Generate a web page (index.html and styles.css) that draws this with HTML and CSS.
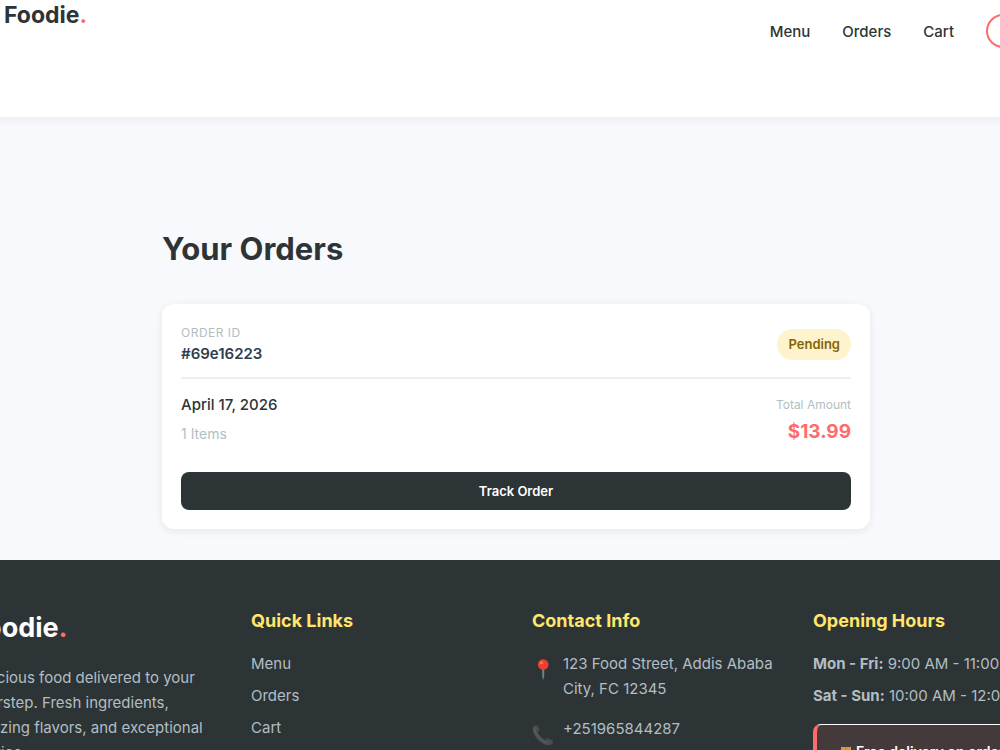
FILE: index.html
```html
<!DOCTYPE html>
<html lang="en">
<head>
    <meta charset="UTF-8">
    <meta name="viewport" content="width=device-width, initial-scale=1.0">
    <title>Your Orders - Foodie</title>
    <link rel="stylesheet" href="styles.css">
</head>
<body>
    <header class="header">
        <a href="#" class="logo">Foodie<span class="dot">.</span></a>
        <nav class="nav">
            <a href="#">Menu</a>
            <a href="#">Orders</a>
            <a href="#">Cart</a>
            <button type="button" class="login-btn">Login</button>
        </nav>
    </header>

    <main class="orders">
        <h1>Your Orders</h1>

        <article class="order-card">
            <div class="order-header">
                <div>
                    <div class="order-label">ORDER ID</div>
                    <div class="order-id">#69e16223</div>
                </div>
                <span class="status">Pending</span>
            </div>
            <div class="order-body">
                <div>
                    <div class="order-date">April 17, 2026</div>
                    <div class="order-items">1 Items</div>
                </div>
                <div class="order-total">
                    <div class="total-label">Total Amount</div>
                    <div class="total-price">$13.99</div>
                </div>
            </div>
            <button type="button" class="track-btn">Track Order</button>
        </article>
    </main>

    <footer class="footer">
        <section>
            <h2 class="footer-logo">Foodie<span class="dot">.</span></h2>
            <p>Delicious food delivered to your doorstep. Fresh ingredients, amazing flavors, and exceptional service.</p>
        </section>

        <section>
            <h3>Quick Links</h3>
            <ul>
                <li><a href="#">Menu</a></li>
                <li><a href="#">Orders</a></li>
                <li><a href="#">Cart</a></li>
            </ul>
        </section>

        <section>
            <h3>Contact Info</h3>
            <div class="contact-item">
                <svg class="icon" viewBox="0 0 22 22" aria-hidden="true">
                    <path d="M10.200 9h2v8.500l-1 3.500-1-3.500z" fill="#5f8796"/>
                    <circle cx="11.200" cy="5.500" r="5.300" fill="#ee3f30"/>
                    <circle cx="9.500" cy="3.700" r="1.500" fill="#f97a6b"/>
                </svg>
                <span>123 Food Street, Addis Ababa City, FC 12345</span>
            </div>
            <div class="contact-item">
                <svg class="icon" viewBox="0 0 22 22" aria-hidden="true">
                    <path d="M1.500 2.500C3 .8 5.500.7 6.300 2.500l1 3c.3 1-.6 1.600-1.500 2.300.8 3.200 4.500 7 7.900 8.200.8-1 1.500-1.600 2.500-1.300l3.500 1.200c2 .9 1.700 3.200 0 4.400-2.300 1.600-6 1.200-9.700-1.300C5.500 16 1.400 11 .8 6.500.6 4.900.7 3.400 1.500 2.500z" fill="#4b4c4e"/>
                    <path d="M2.500 3.500c-.6 5.500 6.500 14 13 15.500" fill="none" stroke="#626466" stroke-width="1"/>
                </svg>
                <span>+251965844287</span>
            </div>
        </section>

        <section>
            <h3>Opening Hours</h3>
            <p class="hours"><strong>Mon - Fri:</strong> 9:00 AM - 11:00 PM</p>
            <p class="hours"><strong>Sat - Sun:</strong> 10:00 AM - 12:00 AM</p>
            <div class="delivery-note">
                <svg class="note-icon" viewBox="0 0 10 12" aria-hidden="true">
                    <rect width="10" height="12" fill="#e39a35"/>
                    <rect x="4" width="2" height="12" fill="#d48c2c"/>
                </svg>
                <span>Free delivery on orders over $30</span>
            </div>
        </section>
    </footer>
</body>
</html>
```

FILE: styles.css
```css
html {
    overflow-x: clip;
}

/* The page bleeds past both edges of the window */
body {
    margin: 0 -62px 0 -30px;
    font-family: Inter, sans-serif;
    font-size: 15px;
    line-height: 25px;
    color: #2d3436;
    background: #f8f9fd;
}

h1, h2, h3, p, ul {
    margin: 0;
    padding: 0;
}

ul {
    list-style: none;
}

a {
    color: inherit;
    text-decoration: none;
}

.dot {
    color: #ff6b6b;
}

/* Header */
.header {
    display: flex;
    justify-content: space-between;
    align-items: flex-start;
    height: 117px;
    padding-left: 34px;
    background: #fff;
    box-shadow: 0 2px 10px rgba(0, 0, 0, 0.06);
}

.logo {
    font-size: 23px;
    font-weight: 700;
    line-height: 30px;
}

.nav {
    display: flex;
    align-items: center;
    gap: 32px;
    padding-top: 14px;
    font-weight: 500;
}

.login-btn {
    width: 76px;
    height: 34px;
    border: 2px solid #ff6b6b;
    border-radius: 17px;
    background: transparent;
    color: #ff6b6b;
    font: inherit;
}

/* Orders */
.orders {
    max-width: 708px;
    margin: 0 auto;
    padding: 112px 0 31px;
}

h1 {
    font-size: 31px;
    line-height: 40px;
    margin-bottom: 35px;
}

.order-card {
    padding: 19px;
    border-radius: 12px;
    background: #fff;
    box-shadow: 0 2px 8px rgba(0, 0, 0, 0.08);
}

.order-header {
    display: flex;
    justify-content: space-between;
    align-items: center;
    padding-bottom: 12px;
    border-bottom: 2px solid #ecf0f1;
}

.order-label,
.total-label {
    font-size: 12px;
    line-height: 20px;
    color: #b2bec3;
}

.order-label {
    letter-spacing: 0.5px;
}

.order-id {
    font-weight: 600;
    line-height: 22px;
    color: #2c3e50;
}

.status {
    padding: 3px 11px;
    border-radius: 19px;
    background: #fff3cd;
    color: #856404;
    font-size: 13px;
    font-weight: 600;
}

.order-body {
    display: flex;
    justify-content: space-between;
    align-items: center;
    padding: 13px 0 26px;
}

.order-date {
    margin-bottom: 4px;
    font-weight: 500;
}

.order-items {
    font-size: 14px;
    color: #b2bec3;
}

.order-total {
    text-align: right;
}

.total-label {
    margin-bottom: 4px;
}

.total-price {
    font-size: 19px;
    font-weight: 700;
    color: #ff6b6b;
}

.track-btn {
    width: 100%;
    height: 38px;
    border: none;
    border-radius: 8px;
    background: #2d3436;
    color: #fff;
    font: 600 13px Inter, sans-serif;
}

/* Footer */
.footer {
    display: grid;
    grid-template-columns: repeat(4, minmax(0, 1fr));
    gap: 32px;
    padding: 48px 0;
    background: #2d3436;
    color: #b2bec3;
}

.footer-logo {
    margin-bottom: 17px;
    font-size: 27px;
    line-height: 40px;
    color: #fff;
}

.footer h3 {
    margin-bottom: 18px;
    font-size: 18px;
    color: #ffe66d;
}

.footer li,
.hours {
    margin-bottom: 7px;
}

.contact-item {
    display: flex;
    gap: 9px;
    margin-bottom: 15px;
}

.icon {
    flex: none;
    width: 22px;
    height: 22px;
    margin-top: 8px;
}

.delivery-note {
    display: flex;
    gap: 5px;
    margin-top: 16px;
    padding: 14px 24px;
    border-top: 1px solid #fff;
    border-left: 4px solid #ff6b6b;
    border-radius: 8px;
    background: #443a3b;
    color: #fff;
    font-weight: 600;
    font-size: 14px;
    white-space: nowrap;
}

.note-icon {
    flex: none;
    width: 10px;
    height: 12px;
    margin-top: 8px;
}
```
